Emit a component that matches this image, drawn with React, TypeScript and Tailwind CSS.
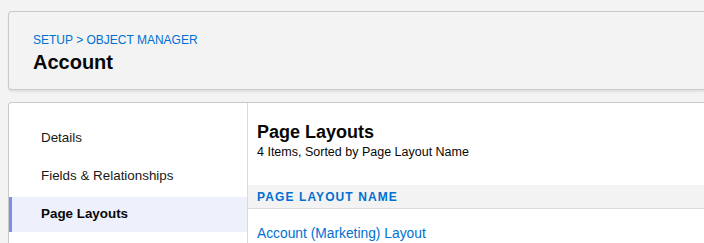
export default function App() {
  const navItems = ['Details', 'Fields & Relationships', 'Page Layouts'];
  const active = 'Page Layouts';

  return (
    <div className="h-screen bg-[#f3f3f3] pt-[11px] pl-2 text-[#080707] font-['Liberation_Sans',Arial,sans-serif] overflow-hidden">
      {/* Header */}
      <div className="h-[79px] rounded-l-[4px] border border-r-0 border-[#c9c9c9] bg-[#f3f3f3] pl-[24px] pt-[21px] shadow-[0_2px_2px_rgba(0,0,0,0.08)]">
        <div className="text-[12px] leading-[14px] text-[#0070d2]">SETUP &gt; OBJECT MANAGER</div>
        <h1 className="mt-[4px] text-[20px] leading-[22px] font-bold">Account</h1>
      </div>

      {/* Body */}
      <div className="mt-3 flex h-[200px] rounded-tl-[4px] border border-r-0 border-b-0 border-[#c9c9c9] bg-white">
        <nav className="w-[239px] shrink-0 border-r border-[#dddbda] pt-[18px] flex flex-col gap-[3px]">
          {navItems.map((item) => (
            <div
              key={item}
              className={
                item === active
                  ? 'relative h-[35px] flex items-center pl-[32px] text-[13.4px] font-bold bg-[#eef1fb] text-[#080707]'
                  : 'relative h-[35px] flex items-center pl-[32px] text-[13.4px] text-[#181818]'
              }
            >
              {item === active && <span className="absolute left-0 top-0 h-full w-[3px] bg-[#7f8ced]" />}
              {item}
            </div>
          ))}
        </nav>

        <main className="flex-1 pt-[18px]">
          <div className="pl-[9px]">
            <h2 className="text-[18px] leading-[22px] font-bold">Page Layouts</h2>
            <p className="mt-[1px] text-[12.5px] leading-[16px] text-[#080707]">4 Items, Sorted by Page Layout Name</p>
          </div>
          <div className="mt-[25px] h-[24px] flex items-center pl-[9px] bg-[#f3f3f3] border-b border-[#dddbda] text-[12px] font-bold tracking-[1.1px] text-[#0070d2]">
            PAGE LAYOUT NAME
          </div>
          <div className="pl-[9px] pt-[17px] text-[13.8px] leading-[16px] text-[#0070d2]">Account (Marketing) Layout</div>
        </main>
      </div>
    </div>
  );
}
